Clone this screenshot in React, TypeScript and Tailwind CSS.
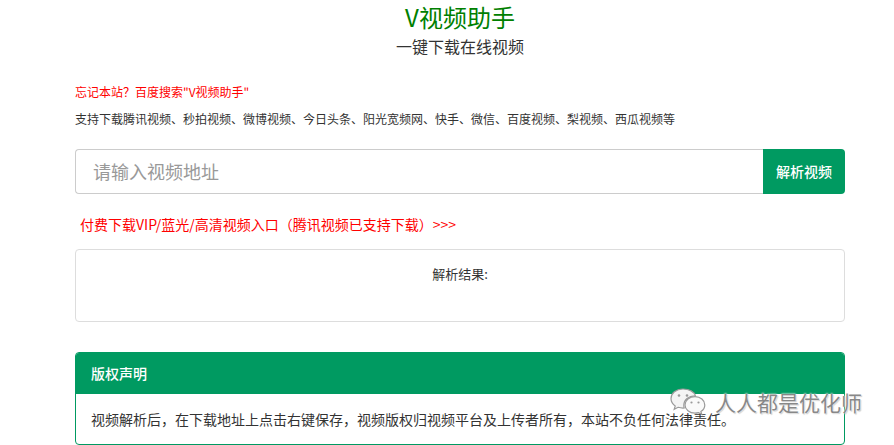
import React from "react"

const cjk = { fontFamily: '"Microsoft YaHei", "Noto Sans CJK SC", "Liberation Sans", sans-serif' }

function WechatMark() {
  return (
    <svg width="38" height="30" viewBox="0 0 38 30" fill="none">
      <path
        d="M14 2C7 2 2 6.3 2 11.6c0 3 1.6 5.6 4.2 7.4L5.2 22.4l3.9-2.1c1.5.5 3.1.8 4.9.8.4 0 .8 0 1.2-.1-.3-.9-.4-1.8-.4-2.7 0-5.3 4.9-9.5 11-9.5h.6C25.3 4.8 20.2 2 14 2z"
        fill="#f4f4f4"
        stroke="#9a9a9a"
        strokeWidth="1.2"
      />
      <path
        d="M26 9.6c-5.5 0-10 3.7-10 8.3s4.5 8.3 10 8.3c1.2 0 2.4-.2 3.5-.5l3.2 1.7-.8-2.9c2.3-1.5 3.9-3.9 3.9-6.6 0-4.6-4.4-8.3-9.8-8.3z"
        fill="#fafafa"
        stroke="#9a9a9a"
        strokeWidth="1.2"
      />
      <circle cx="10" cy="8.5" r="1.3" fill="#9a9a9a" />
      <circle cx="18" cy="8.5" r="1.3" fill="#9a9a9a" />
      <circle cx="22.5" cy="15.5" r="1.1" fill="#9a9a9a" />
      <circle cx="29.5" cy="15.5" r="1.1" fill="#9a9a9a" />
    </svg>
  )
}

export default function App() {
  return (
    <div className="relative w-[894px] h-[445px] overflow-hidden bg-white text-[#333]" style={cjk}>
      <div className="ml-[75px] w-[770px]">
        {/* header */}
        <div className="flex flex-col items-center pt-[3px]">
          <h1 className="text-[24px] leading-[28px] font-normal text-[#008000]">V视频助手</h1>
          <p className="mt-[5px] text-[16px] leading-[20px] text-[#333]">一键下载在线视频</p>
        </div>

        <p className="mt-[28px] text-[12px] leading-[16px] text-[#ff0000]">忘记本站？百度搜索"V视频助手"</p>
        <p className="mt-[11px] text-[12px] leading-[16px] text-[#333]">
          支持下载腾讯视频、秒拍视频、微博视频、今日头条、阳光宽频网、快手、微信、百度视频、梨视频、西瓜视频等
        </p>

        {/* input */}
        <div className="mt-[22px] flex h-[45px]">
          <div className="flex flex-1 items-center rounded-l-[4px] border border-r-0 border-[#ccc] pl-[17px]">
            <span className="text-[18px] text-[#999]">请输入视频地址</span>
          </div>
          <button className="flex w-[82px] items-center justify-center rounded-r-[4px] bg-[#009a61] text-[14px] font-medium text-white">
            解析视频
          </button>
        </div>

        <p className="mt-[21px] pl-[5px] text-[14px] leading-[18px] text-[#ff0000]">
          付费下载VIP/蓝光/高清视频入口（腾讯视频已支持下载）&gt;&gt;&gt;
        </p>

        {/* result */}
        <div className="mt-[16px] flex h-[73px] justify-center rounded-[4px] border border-[#ddd] pt-[15px]">
          <span className="text-[13px] leading-[18px] text-[#333]">解析结果:</span>
        </div>

        {/* copyright panel */}
        <div className="mt-[30px] overflow-hidden rounded-[4px] border border-[#009a61]">
          <div className="flex h-[41px] items-center bg-[#009a61] px-[15px]">
            <span className="text-[14px] font-medium text-white">版权声明</span>
          </div>
          <div className="px-[15px] py-[15px] text-[14px] leading-[20px] text-[#333]">
            视频解析后，在下载地址上点击右键保存，视频版权归视频平台及上传者所有，本站不负任何法律责任。
          </div>
        </div>
      </div>

      {/* watermark */}
      <div className="absolute left-[669px] top-[387px] flex items-center gap-[8px]">
        <WechatMark />
        <span
          className="text-[21px] leading-[26px] text-[#888]"
          style={{ textShadow: "0 0 2px #fff, 0 0 2px #fff, 1px 1px 1px rgba(0,0,0,0.25)" }}
        >
          人人都是优化师
        </span>
      </div>
    </div>
  )
}
